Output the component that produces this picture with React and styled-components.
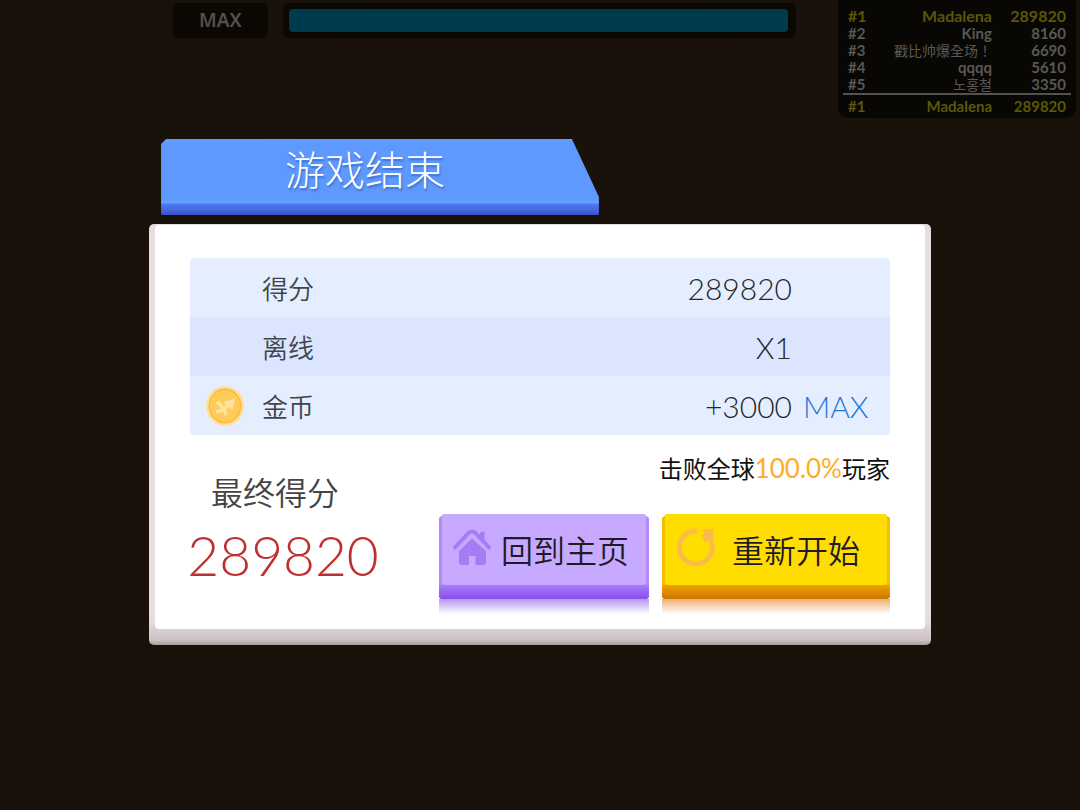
import React from "react";
import styled, { createGlobalStyle } from "styled-components";

const GlobalStyle = createGlobalStyle`
  * {
    box-sizing: border-box;
  }

  body {
    margin: 0;
    background: #18110a;
    font-family: "Lato", "Noto Sans CJK SC", sans-serif;
  }
`;

// HUD behind the dialog
const Page = styled.div`
  position: relative;
  min-height: 100vh;
  background: radial-gradient(circle at 50% 30%, #1a110b, #17110a);
`;

const Hud = styled.header`
  display: flex;
  align-items: flex-start;
  padding: 0 4px 0 16%;
  font-weight: 700;
`;

const LevelBadge = styled.div`
  width: 95px;
  height: 35px;
  margin-top: 3px;
  border-radius: 5px;
  background: #0b0804;
  color: #53504d;
  font-family: "Noto Sans", sans-serif;
  font-size: 19px;
  font-weight: 600;
  line-height: 34px;
  text-align: center;
`;

const Track = styled.div`
  flex: 1;
  height: 35px;
  margin: 3px 42px 0 15px;
  padding: 6px 8px 6px 6px;
  border-radius: 6px;
  background: #0b0804;
`;

const Fill = styled.div`
  height: 100%;
  border-radius: 4px;
  background: #003a4d;
`;

const Board = styled.div`
  width: 238px;
  height: 118px;
  padding: 6px 5px 0;
  border-radius: 0 0 10px 10px;
  background: #090703;
`;

const Ranks = styled.table`
  width: 100%;
  border-collapse: collapse;
  color: #5a5856;
  font-family: "Lato", "Noto Sans CJK TC", "Noto Sans CJK KR", sans-serif;

  td {
    padding: 0 5px;
    text-align: right;
    white-space: nowrap;
  }

  td:first-child {
    width: 30px;
    text-align: left;
  }

  td:last-child {
    width: 74px;
  }

  tfoot td {
    height: 23px;
    border-top: 2px solid #555350;
  }
`;

const RankRow = styled.tr`
  color: ${(props) => (props.$me ? "#5b5708" : "inherit")};
  font-size: ${(props) => (props.$top ? "16px" : "15px")};
  line-height: ${(props) => (props.$top ? "19px" : "17px")};
`;

const NameCell = styled.td`
  font-size: ${(props) => (props.$cjk ? "14px" : "inherit")};
  font-weight: ${(props) => (props.$cjk ? 400 : 700)};
`;

// Dialog
const Overlay = styled.div`
  position: absolute;
  inset: 0;
  display: flex;
  align-items: center;
  justify-content: center;
  padding-bottom: 26px;
`;

const Dialog = styled.section`
  width: 72.4%;
  min-width: 760px;
`;

const TitleTab = styled.div`
  width: 56%;
  height: 76px;
  margin: 0 0 9px 12px;
  background: linear-gradient(
    #629cff 0,
    #5d99ff 4px,
    #5d99ff 60px,
    #6aa2ff 64px,
    #4c78ef 65px,
    #476ce6 70px,
    #3d4fc4 76px
  );
  clip-path: polygon(0 5px, 5px 0, calc(100% - 27px) 0, 100% 58px, 100% 75px, calc(100% - 1px) 100%, 1px 100%, 0 75px);
`;

const Title = styled.h1`
  margin: 0;
  padding-right: 30px;
  color: #fff;
  font-family: "Noto Sans CJK SC", sans-serif;
  font-size: 40px;
  font-weight: 300;
  line-height: 58px;
  text-align: center;
  text-shadow: 1px 2px 2px rgba(40, 70, 160, 0.5);
`;

const Panel = styled.div`
  padding: 1px 6px 16px;
  border-radius: 5px;
  background: linear-gradient(to top, #a89b9c 0, #cdc2c4 5px, #d9ced1 15px, #e7dcdf 24px);
`;

const PanelBody = styled.div`
  padding: 33px 35px 15px;
  border-radius: 4px;
  background: #fff;
`;

const Stats = styled.table`
  width: 100%;
  border-collapse: collapse;
  border-radius: 4px;
  overflow: hidden;
  color: #26282b;
  font-size: 30px;
  font-weight: 300;

  tr {
    height: 59px;
    background: #e5eeff;
  }

  tr:nth-child(2) {
    background: #dbe5ff;
  }

  th,
  td {
    padding: 0;
    line-height: 40px;
  }

  th {
    color: #424549;
    font-family: "Noto Sans CJK SC", sans-serif;
    font-size: 26px;
    font-weight: 350;
    text-align: left;
  }
`;

const IconCell = styled.td`
  width: 72px;
  padding-left: 15px !important;

  svg {
    display: block;
  }
`;

const ValueCell = styled.td`
  text-align: right;
`;

const NoteCell = styled.td`
  width: 98px;
  padding-left: 11px !important;
  color: #1f76da;
`;

const Footer = styled.div`
  display: flex;
  justify-content: space-between;
`;

const Final = styled.div`
  width: 186px;
  padding-top: 34px;
`;

const FinalLabel = styled.div`
  padding-right: 16px;
  color: #444;
  font-family: "Noto Sans CJK SC", sans-serif;
  font-size: 32px;
  font-weight: 350;
  line-height: 44px;
  text-align: center;
`;

const FinalScore = styled.div`
  display: flex;
  justify-content: center;
  color: #c02f2f;
  font-size: 55px;
  font-weight: 300;
  line-height: 84px;
`;

const Side = styled.div`
  padding-top: 15px;
`;

const Beat = styled.p`
  margin: 0 0 27px;
  color: #111;
  font-size: 24px;
  line-height: 36px;
  text-align: right;

  span {
    color: #ffad26;
    font-size: 26px;
  }
`;

const Actions = styled.div`
  display: flex;
  gap: 13px;
`;

const themes = {
  home: {
    face: "#c7a9ff",
    edge: "#b18af8",
    side: "#a87bfb, #8950e8",
    glow: "rgba(137, 80, 232, 0.6)",
  },
  restart: {
    face: "#ffdd00",
    edge: "#f3bd00",
    side: "#eea200, #cf7600",
    glow: "rgba(226, 120, 20, 0.6)",
  },
};

const ActionButton = styled.button`
  width: ${(props) => props.$width};
  padding: 0;
  border: none;
  background: none;
  color: #1f1b26;
  font-family: "Noto Sans CJK SC", sans-serif;
  font-size: 32px;
  font-weight: 350;
  cursor: pointer;

  &::after {
    content: "";
    display: block;
    height: 15px;
    background: linear-gradient(${(props) => themes[props.$kind].glow}, rgba(255, 255, 255, 0));
  }
`;

const Block = styled.span`
  display: block;
  padding: 0 3px 14px;
  background: linear-gradient(${(props) => themes[props.$kind].side}) bottom / 100% 14px no-repeat
    ${(props) => themes[props.$kind].edge};
  clip-path: polygon(0 4px, 5px 0, calc(100% - 5px) 0, 100% 4px, 100% calc(100% - 2px), calc(100% - 2px) 100%, 2px 100%, 0 calc(100% - 2px));
`;

const Face = styled.span`
  display: flex;
  align-items: center;
  justify-content: space-between;
  height: 71px;
  padding: ${(props) => (props.$kind === "home" ? "0 17px 0 10px" : "0 27px 0 11px")};
  border-radius: 0 0 3px 3px;
  background: ${(props) => themes[props.$kind].face};
  line-height: 75px;

  svg {
    margin-bottom: 6px;
  }
`;

const CoinIcon = () => (
  <svg width="40" height="42" viewBox="0 0 40 42" aria-hidden="true">
    <ellipse cx="20" cy="21" rx="19" ry="20" fill="#ffe09a" />
    <ellipse cx="20" cy="21" rx="16.5" ry="17.5" fill="#fbb845" />
    <ellipse cx="20" cy="21" rx="15" ry="16" fill="#ffcc58" />
    <g fill="none" stroke="#ffe3a0" strokeWidth="3.5">
      <path d="M12 17q6 4 9 13M11 27q8-1 14-9" />
    </g>
    <path d="M18 17l12-3.500L27.500 25z" fill="#ffe3a0" />
  </svg>
);

const HomeIcon = () => (
  <svg width="40" height="38" viewBox="0 0 40 38" aria-hidden="true">
    <path
      d="M3 19.500L16.500 5q3.500-3 7 0L37 19.500"
      fill="none"
      stroke="#a67cf3"
      strokeWidth="4"
      strokeLinecap="round"
    />
    <path d="M28 4.500q2-1 4.500-1v9.500l-4.500-4.500z" fill="#a67cf3" />
    <path d="M20 10.500L7 23v11q0 3 3 3H17V28h6.500v9H31q3 0 3-3V23z" fill="#a67cf3" />
  </svg>
);

const RestartIcon = () => (
  <svg width="40" height="40" viewBox="0 0 40 40" aria-hidden="true">
    <path d="M21 4A16.500 16.500 0 1 0 34 12" fill="none" stroke="#fabb48" strokeWidth="5" />
    <path d="M25 2.500L38 2l-1 13-3-3-5 3.500-3-7 2.500-2.500z" fill="#fabb48" />
  </svg>
);

const players = [
  { rank: "#1", name: "Madalena", score: 289820, me: true },
  { rank: "#2", name: "King", score: 8160 },
  { rank: "#3", name: "戳比帅爆全场！", score: 6690, cjk: true },
  { rank: "#4", name: "qqqq", score: 5610 },
  { rank: "#5", name: "노홍철", score: 3350, cjk: true },
];

const App = () => {
  const me = players[0];

  return (
    <Page>
      <GlobalStyle />
      <Hud>
        <LevelBadge>MAX</LevelBadge>
        <Track role="progressbar" aria-label="MAX" aria-valuenow={100}>
          <Fill />
        </Track>
        <Board>
          <Ranks>
            <tbody>
              {players.map((p) => (
                <RankRow key={p.rank} $me={p.me} $top={p.me}>
                  <td>{p.rank}</td>
                  <NameCell $cjk={p.cjk}>{p.name}</NameCell>
                  <td>{p.score}</td>
                </RankRow>
              ))}
            </tbody>
            <tfoot>
              <RankRow $me>
                <td>{me.rank}</td>
                <NameCell>{me.name}</NameCell>
                <td>{me.score}</td>
              </RankRow>
            </tfoot>
          </Ranks>
        </Board>
      </Hud>

      <Overlay>
        <Dialog role="dialog" aria-labelledby="dialog-title">
          <TitleTab>
            <Title id="dialog-title">游戏结束</Title>
          </TitleTab>
          <Panel>
            <PanelBody>
              <Stats>
                <tbody>
                  <tr>
                    <IconCell />
                    <th scope="row">得分</th>
                    <ValueCell>289820</ValueCell>
                    <NoteCell />
                  </tr>
                  <tr>
                    <IconCell />
                    <th scope="row">离线</th>
                    <ValueCell>X1</ValueCell>
                    <NoteCell />
                  </tr>
                  <tr>
                    <IconCell>
                      <CoinIcon />
                    </IconCell>
                    <th scope="row">金币</th>
                    <ValueCell>+3000</ValueCell>
                    <NoteCell>MAX</NoteCell>
                  </tr>
                </tbody>
              </Stats>
              <Footer>
                <Final>
                  <FinalLabel>最终得分</FinalLabel>
                  <FinalScore>289820</FinalScore>
                </Final>
                <Side>
                  <Beat>
                    击败全球<span>100.0%</span>玩家
                  </Beat>
                  <Actions>
                    <ActionButton type="button" $kind="home" $width="210px">
                      <Block $kind="home">
                        <Face $kind="home">
                          <HomeIcon />
                          回到主页
                        </Face>
                      </Block>
                    </ActionButton>
                    <ActionButton type="button" $kind="restart" $width="228px">
                      <Block $kind="restart">
                        <Face $kind="restart">
                          <RestartIcon />
                          重新开始
                        </Face>
                      </Block>
                    </ActionButton>
                  </Actions>
                </Side>
              </Footer>
            </PanelBody>
          </Panel>
        </Dialog>
      </Overlay>
    </Page>
  );
};

export default App;
